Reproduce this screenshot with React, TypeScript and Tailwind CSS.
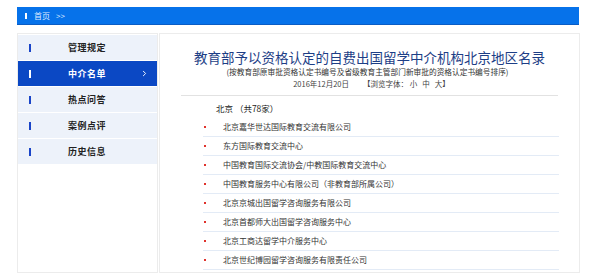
import { ChevronRight } from "lucide-react";

const MENU = [
  { label: "管理规定", active: false },
  { label: "中介名单", active: true },
  { label: "热点问答", active: false },
  { label: "案例点评", active: false },
  { label: "历史信息", active: false },
];

const AGENCIES = [
  "北京嘉华世达国际教育交流有限公司",
  "东方国际教育交流中心",
  "中国教育国际交流协会/中教国际教育交流中心",
  "中国教育服务中心有限公司（非教育部所属公司）",
  "北京京城出国留学咨询服务有限公司",
  "北京首都师大出国留学咨询服务中心",
  "北京工商达留学中介服务中心",
  "北京世纪博园留学咨询服务有限责任公司",
];

const font = { fontFamily: '"Noto Sans CJK SC", "Noto Sans", sans-serif' };

export default function App() {
  return (
    <div className="w-[600px] h-[273px] overflow-hidden bg-white pt-[7px]" style={font}>
      {/* breadcrumb bar */}
      <div className="ml-[17px] w-[562px] h-[18px] bg-[#0672ea] border-b border-[#0a5cc4] flex items-center">
        <span className="ml-[8px] w-[2px] h-[6px] bg-white" />
        <span className="ml-[7px] text-[8px] leading-none text-[#dfeaff]">首页</span>
        <span className="ml-[6px] text-[8px] leading-none text-[#dfeaff]">&gt;&gt;</span>
      </div>

      <div className="flex ml-[17px] mt-[8px]">
        {/* side menu */}
        <div className="w-[141px] h-[240px] border border-[#ececec] bg-white pt-[1px]">
          {MENU.map((m) => (
            <div
              key={m.label}
              className={`h-[25px] mb-[1px] flex items-center relative ${
                m.active ? "bg-[#0b48c4]" : "bg-[#edf2fa]"
              }`}
            >
              <span className={`ml-[11px] w-[2px] h-[8px] ${m.active ? "bg-white" : "bg-[#1a45c8]"}`} />
              <span
                className={`ml-[37px] text-[9px] font-bold tracking-[0.5px] ${
                  m.active ? "text-white" : "text-[#222]"
                }`}
              >
                {m.label}
              </span>
              {m.active && (
                <ChevronRight className="absolute right-[8px] w-[9px] h-[9px] text-white" strokeWidth={2.5} />
              )}
            </div>
          ))}
        </div>

        {/* content */}
        <div className="w-[421px] h-[240px] border border-[#ececec] ml-[1px] flex flex-col">
          <div className="pt-[15px] text-center text-[13.5px] leading-[17px] text-[#1d3e86]">
            教育部予以资格认定的自费出国留学中介机构北京地区名录
          </div>
          <div className="text-center text-[7.7px] leading-[11px] text-[#333] pr-[4px]">
            (按教育部原审批资格认定书编号及省级教育主管部门新审批的资格认定书编号排序)
          </div>
          <div className="mt-[2px] flex justify-center gap-[14px] text-[7.5px] leading-[10px] text-[#444] pl-[4px]">
            <span>2016年12月20日</span>
            <span>【浏览字体： 小&nbsp;&nbsp; 中&nbsp;&nbsp; 大】</span>
          </div>
          <div className="mt-[6px] mx-[21px] h-px bg-[#e2e2e2]" />
          <div className="mt-[6px] ml-[56px] text-[8.5px] leading-[12px] text-[#222]">北京 （共78家）</div>
          <ul className="mt-[4px] ml-[43px] mr-[20px]">
            {AGENCIES.map((a) => (
              <li key={a} className="h-[19px] flex items-center border-b border-[#e3ebf6]">
                <span className="w-[2px] h-[2px] bg-[#e0322c] ml-[1px]" />
                <span className="ml-[17px] text-[8px] text-[#333]">{a}</span>
              </li>
            ))}
          </ul>
        </div>
      </div>
    </div>
  );
}
